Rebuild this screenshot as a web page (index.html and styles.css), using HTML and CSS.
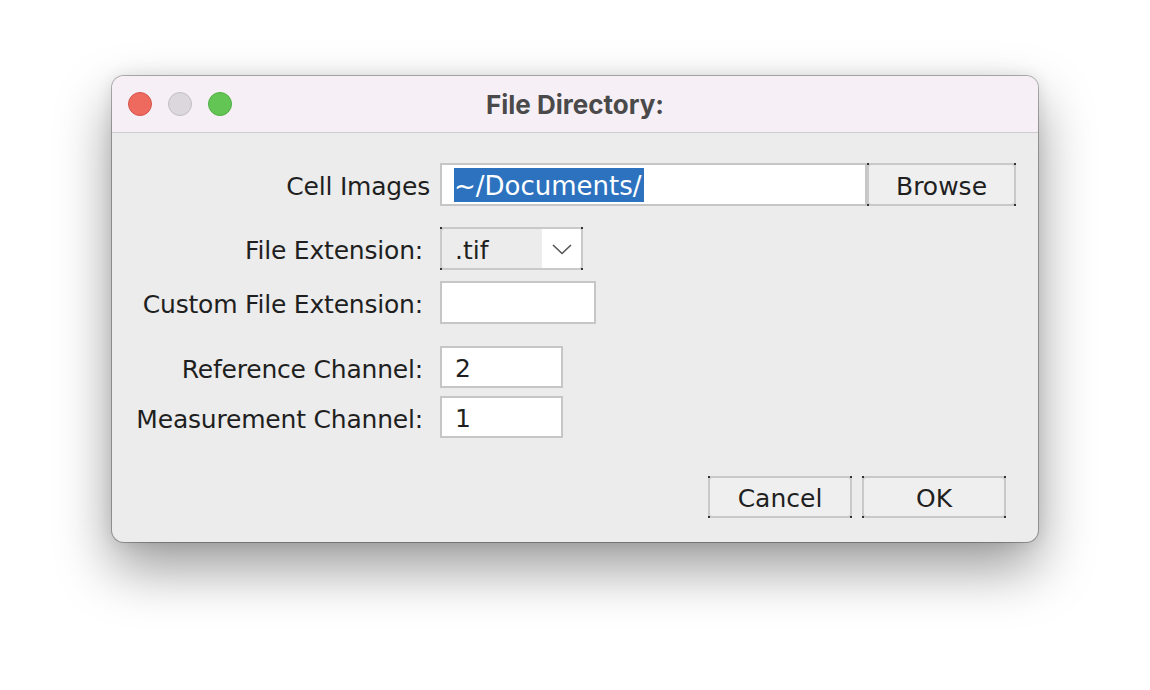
FILE: index.html
```html
<!DOCTYPE html>
<html>
<head>
<meta charset="utf-8">
<link rel="stylesheet" href="styles.css">
</head>
<body>
<div class="stage">
  <div class="dialog">
    <div class="titlebar">
      <div class="lights">
        <span class="light red"></span>
        <span class="light gray"></span>
        <span class="light green"></span>
      </div>
      <div class="title">File Directory:</div>
      <div class="spacer"></div>
    </div>
    <div class="content">
      <div class="row row-cell">
        <div class="label label-cell">Cell Images</div>
        <div class="field field-path"><span class="selected">~/Documents/</span></div>
        <div class="btn btn-browse">Browse</div>
      </div>
      <div class="row row-ext">
        <div class="label">File Extension:</div>
        <div class="combo">
          <div class="combo-value">.tif</div>
          <div class="combo-arrow">
            <svg width="20" height="11" viewBox="0 0 20 11"><polyline points="1,1 10,9.5 19,1" fill="none" stroke="#555" stroke-width="1.6"/></svg>
          </div>
        </div>
      </div>
      <div class="row row-custom">
        <div class="label">Custom File Extension:</div>
        <div class="field field-custom"></div>
      </div>
      <div class="row row-ref">
        <div class="label">Reference Channel:</div>
        <div class="field field-num">2</div>
      </div>
      <div class="row row-meas">
        <div class="label">Measurement Channel:</div>
        <div class="field field-num">1</div>
      </div>
      <div class="actions">
        <div class="btn btn-action">Cancel</div>
        <div class="btn btn-action">OK</div>
      </div>
    </div>
  </div>
</div>
</body>
</html>
```
FILE: styles.css
```css
html, body {
  margin: 0;
  padding: 0;
  background: #ffffff;
  width: 1150px;
  height: 690px;
  overflow: hidden;
}
.stage {
  padding: 76px 0 0 112px;
}
.dialog {
  width: 926px;
  height: 466px;
  border-radius: 12px;
  overflow: hidden;
  background: #ececec;
  box-shadow: 0 0 0 1px rgba(0,0,0,0.28), 0 26px 55px rgba(0,0,0,0.40), 0 0 16px rgba(0,0,0,0.10);
  display: flex;
  flex-direction: column;
  font-family: "DejaVu Sans", "Noto Sans", sans-serif;
  color: #1f1f1f;
}
.titlebar {
  height: 57px;
  box-sizing: border-box;
  background: #f6f0f6;
  border-bottom: 1px solid #cfcbcf;
  display: grid;
  grid-template-columns: 1fr auto 1fr;
  align-items: center;
}
.lights {
  display: flex;
  gap: 16px;
  padding-left: 16px;
  padding-top: 0px;
}
.light {
  width: 22px;
  height: 22px;
  border-radius: 50%;
  border: 1px solid;
}
.red { background: #ee6a5f; border-color: #d4544a; }
.gray { background: #dcd7dc; border-color: #c3bec3; }
.green { background: #62c554; border-color: #4fae42; }
.title {
  font-family: "Inter", "Liberation Sans", sans-serif;
  font-weight: 700;
  font-size: 26px;
  color: #4b4a4b;
  padding-top: 0px;
}
.content {
  display: flex;
  flex-direction: column;
  padding-top: 30px;
}
.row {
  display: flex;
  align-items: center;
}
.label {
  width: 328px;
  box-sizing: border-box;
  padding-right: 17px;
  padding-top: 4px;
  text-align: right;
  font-size: 25px;
  letter-spacing: -0.2px;
  white-space: nowrap;
}
.label-cell { padding-right: 10px; }
.row-ext { margin-top: 21px; }
.row-custom { margin-top: 11px; }
.row-ref { margin-top: 22px; }
.row-meas { margin-top: 8px; }
.field {
  box-sizing: border-box;
  height: 43px;
  background: #ffffff;
  border: 2px solid #c6c6c6;
  font-size: 25px;
  display: flex;
  align-items: center;
  padding-left: 12px;
  padding-top: 2px;
}
.field-path { width: 427px; padding-top: 0; }
.selected {
  background: #2c72bf;
  color: #ffffff;
  font-size: 26px;
  line-height: 32px;
  padding: 2px 2px 0 0;
}
.field-custom { width: 156px; }
.field-num { width: 123px; height: 42px; padding-left: 13px; }
.btn {
  position: relative;
  box-sizing: border-box;
  height: 43px;
  border: 2px solid #c9c9c9;
  border-radius: 4px;
  background: #efefef;
  font-size: 25px;
  padding-top: 3px;
  display: flex;
  align-items: center;
  justify-content: center;
}
.btn::before, .combo::before {
  content: "";
  position: absolute;
  inset: -2px;
  pointer-events: none;
  background:
    linear-gradient(#333, #333) left top / 2px 2px no-repeat,
    linear-gradient(#333, #333) right top / 2px 2px no-repeat,
    linear-gradient(#333, #333) left bottom / 2px 2px no-repeat,
    linear-gradient(#333, #333) right bottom / 2px 2px no-repeat;
}
.btn-browse { width: 149px; }
.combo {
  position: relative;
  box-sizing: border-box;
  width: 143px;
  height: 43px;
  border: 2px solid #c9c9c9;
  border-radius: 4px;
  background: #ececec;
  display: flex;
}
.combo-value {
  flex: 1;
  font-size: 25px;
  display: flex;
  align-items: center;
  padding-left: 13px;
  padding-top: 3px;
}
.combo-arrow {
  width: 39px;
  background: #ffffff;
  display: flex;
  align-items: center;
  justify-content: center;
  border-radius: 0 2px 2px 0;
}
.combo-arrow svg { display: block; margin-top: 2px; }
.actions {
  display: flex;
  justify-content: flex-end;
  gap: 10px;
  margin-top: 38px;
  padding-right: 32px;
}
.btn-action { width: 144px; height: 42px; }
```
